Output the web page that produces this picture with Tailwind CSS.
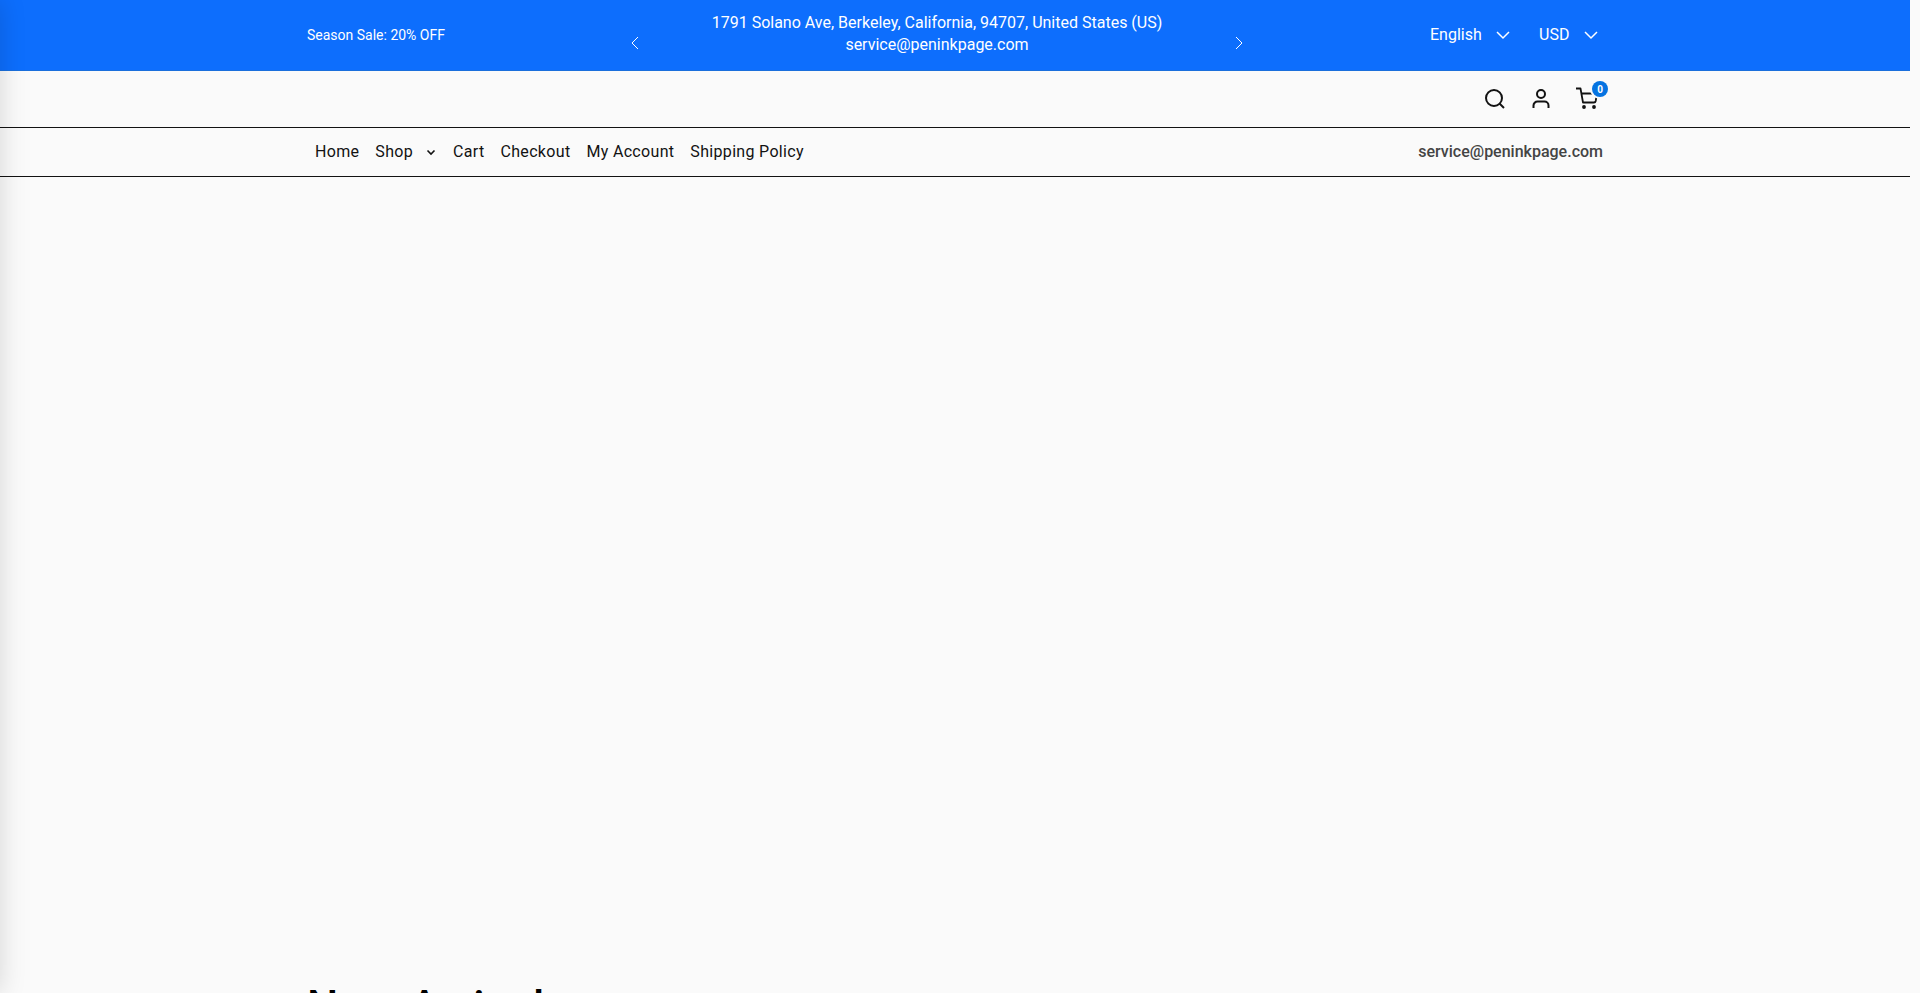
<!DOCTYPE html>
<html lang="en">
<head>
  <meta charset="UTF-8">
  <meta name="viewport" content="width=device-width, initial-scale=1.0">
  <title>Pen Ink Page</title>
  <script src="https://cdn.jsdelivr.net/npm/@tailwindcss/browser@4"></script>
</head>
<body class="h-screen overflow-hidden bg-[#fafafa] pr-[10px] font-[Roboto,sans-serif] text-base text-[#121212]">
  <!-- Off-canvas menu, closed -->
  <aside class="fixed inset-y-0 -left-80 z-20 w-80 bg-white shadow-[0_0_25px_rgba(0,0,0,0.15)]"></aside>

  <!-- Announcement bar -->
  <div class="border-b border-[#1a6fdc] bg-[#0d6efd] text-white">
    <div class="mx-auto grid h-[70px] max-w-[1296px] grid-cols-[1fr_620px_356px] items-center">
      <p class="text-sm">Season Sale: 20% OFF</p>
      <div class="flex items-center justify-between">
        <button aria-label="Previous" class="pt-4">
          <svg class="h-4 w-4" viewBox="0 0 16 16" fill="none" stroke="currentColor"><path d="M11 2 5 8l6 6"/></svg>
        </button>
        <p class="pb-0.5 text-center leading-[22px]">1791 Solano Ave, Berkeley, California, 94707, United States (US)<br>service@peninkpage.com</p>
        <button aria-label="Next" class="pt-4">
          <svg class="h-4 w-4" viewBox="0 0 16 16" fill="none" stroke="currentColor"><path d="m5 2 6 6-6 6"/></svg>
        </button>
      </div>
      <div class="flex justify-end gap-7 pr-1">
        <div class="grid items-center">
          <select aria-label="Language" class="col-start-1 row-start-1 appearance-none pr-[29px]">
            <option>English</option>
          </select>
          <svg class="pointer-events-none col-start-1 row-start-1 h-4 w-4 justify-self-end" viewBox="0 0 16 16" fill="none" stroke="currentColor" stroke-width="1.5"><path d="m2 5 6 6 6-6"/></svg>
        </div>
        <div class="grid items-center">
          <select aria-label="Currency" class="col-start-1 row-start-1 appearance-none pr-[29px]">
            <option>USD</option>
          </select>
          <svg class="pointer-events-none col-start-1 row-start-1 h-4 w-4 justify-self-end" viewBox="0 0 16 16" fill="none" stroke="currentColor" stroke-width="1.5"><path d="m2 5 6 6 6-6"/></svg>
        </div>
      </div>
    </div>
  </div>

  <!-- Header icons -->
  <header class="border-b border-[#121212]">
    <div class="mx-auto flex h-14 max-w-[1296px] items-center justify-end gap-[22px] pr-1">
      <button aria-label="Search">
        <svg class="h-6 w-6" viewBox="0 0 24 24" fill="none" stroke="currentColor" stroke-width="2"><circle cx="11" cy="11" r="8"/><path d="m16.500 16.500 4.500 4.500"/></svg>
      </button>
      <a href="#" aria-label="Account">
        <svg class="h-6 w-6" viewBox="0 0 24 24" fill="none" stroke="currentColor" stroke-width="2"><circle cx="12" cy="7" r="4"/><path d="M4.500 21v-2.500a4 4 0 0 1 4-4h7a4 4 0 0 1 4 4V21"/></svg>
      </a>
      <a href="#" aria-label="Cart" class="relative">
        <svg class="h-6 w-6" viewBox="0 0 24 24" fill="none" stroke="currentColor" stroke-width="1.8" stroke-linejoin="round"><path d="M1 1.500h4.500L8 15.500h11c1 0 1.500-.5 1.700-1.500L22 6.500H6.500"/><circle cx="9" cy="20" r="1" fill="currentColor"/><circle cx="19" cy="20" r="1" fill="currentColor"/></svg>
        <span class="absolute -top-1.5 -right-[9px] flex h-4 w-4 items-center justify-center rounded-full bg-[#0573e1] text-[10px] font-bold text-white ring-2 ring-[#fafafa]">0</span>
      </a>
    </div>
  </header>

  <!-- Main navigation -->
  <nav class="border-b border-[#121212]">
    <div class="mx-auto flex h-12 max-w-[1296px] items-center justify-between pl-2">
      <ul class="flex items-center gap-4 tracking-[0.02em]">
        <li><a href="#">Home</a></li>
        <li>
          <a href="#" class="flex items-center gap-3">Shop
            <svg class="h-3 w-3" viewBox="0 0 12 12" fill="none" stroke="currentColor" stroke-width="1.6"><path d="m2.500 4.500 3.500 3.500 3.500-3.500"/></svg>
          </a>
        </li>
        <li><a href="#">Cart</a></li>
        <li><a href="#">Checkout</a></li>
        <li><a href="#">My Account</a></li>
        <li><a href="#">Shipping Policy</a></li>
      </ul>
      <a href="mailto:service@peninkpage.com" class="font-medium text-[#444]">service@peninkpage.com</a>
    </div>
  </nav>

  <main>
    <!-- Hero slider -->
    <section class="h-[805px]" aria-label="Featured"></section>

    <section class="mx-auto max-w-[1296px]">
      <h2 class="text-[44px] leading-[50px] font-medium tracking-wide text-black">New Arrivals</h2>
    </section>
  </main>
</body>
</html>
